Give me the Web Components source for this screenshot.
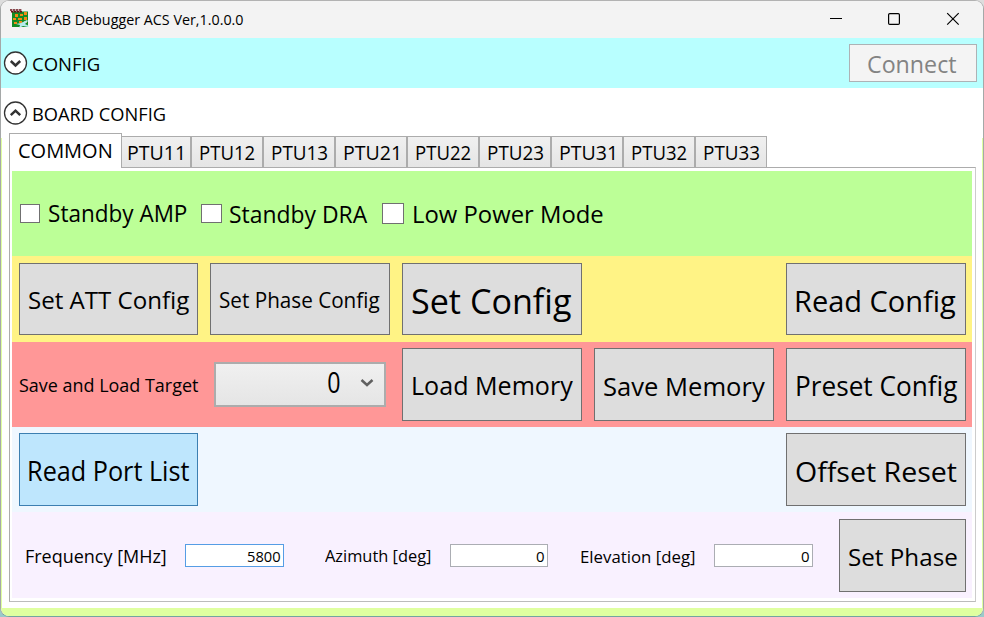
<!DOCTYPE html>
<html lang="en"><head><meta charset="utf-8"><title>PCAB Debugger ACS Ver,1.0.0.0</title>
<style>html,body{margin:0;height:100%;overflow:hidden}body{font-family:"Open Sans","Noto Sans",sans-serif;background:linear-gradient(#ddd 50%,#9acaca 50%)}</style></head>
<body><debugger-window></debugger-window>
<script>
const define=(name,html,setup)=>{
  const t=document.createElement('template');t.innerHTML=html;
  customElements.define(name,class extends HTMLElement{
    connectedCallback(){
      if(this.shadowRoot)return;
      this.attachShadow({mode:'open'}).append(t.content.cloneNode(true));
      if(setup)setup(this,this.shadowRoot);
    }
  });
};
const ctx=document.createElement('canvas').getContext('2d');
const num=(el,n,d=0)=>el.hasAttribute(n)?parseFloat(el.getAttribute(n)):d;

/* Label whose visible glyphs span exactly "w" pixels, baseline "base" px below its container's top. */
define('ui-text','<style>:host{display:block;flex:none;white-space:nowrap}span{display:inline-block;transform-origin:0 0;white-space:pre}</style><span><slot></slot></span>',(el,r)=>{
  const s=num(el,'size',16),w=num(el,'w',100);
  ctx.font=`${s}px "Open Sans"`;
  const m=ctx.measureText(el.textContent),k=w/(m.actualBoundingBoxLeft+m.actualBoundingBoxRight);
  const lh=Math.round(s*1.36),off=Math.round((lh-s*1.362)/2+s*1.069);
  el.style.cssText=`width:${w}px;height:${lh}px;line-height:${lh}px;font-size:${s}px;margin-top:${num(el,'base')-off}px;margin-left:${num(el,'gap')}px`;
  r.querySelector('span').style.transform=`translateX(${m.actualBoundingBoxLeft*k}px) scaleX(${k})`;
});

define('ui-button',`<style>:host{display:flex;flex:none;box-sizing:border-box;align-items:flex-start;background:#ddd;border:1px solid #707070;color:#000}
:host([hot]){background:#bee6fd;border-color:#3c7fb1}:host([disabled]){background:#f4f4f4;border-color:#adb2b5;color:#838383}</style><slot></slot>`,(el)=>{
  el.style.width=num(el,'width')+'px';el.style.height=num(el,'height')+'px';
  el.style.marginTop=num(el,'top')+'px';el.style.marginLeft=el.hasAttribute('end')?'auto':num(el,'gap')+'px';
});

define('ui-check',`<style>:host{display:block;flex:none;box-sizing:border-box;background:#fff;border:1px solid #707070}</style>`,el=>{
  el.style.width=num(el,'width')+'px';el.style.height=num(el,'height')+'px';
  el.style.marginTop=num(el,'top')+'px';el.style.marginLeft=num(el,'gap')+'px';
});

define('ui-field',`<style>:host{display:flex;flex:none;box-sizing:border-box;height:23px;margin-top:32px;background:#fff;border:1px solid #abadb3;justify-content:flex-end;align-items:flex-start;padding-right:3px}:host([focused]){border-color:#569de5}</style><slot></slot>`,el=>{
  el.style.width=num(el,'width')+'px';el.style.marginLeft=num(el,'gap')+'px';
});

define('ui-combo',`<style>:host{display:flex;flex:none;box-sizing:border-box;width:172px;height:45px;margin:20px 0 0 16px;border:2px solid #acacac;background:linear-gradient(#f0f0f0,#e5e5e5);align-items:flex-start}
svg{margin:14px 0 0 20px}</style><slot></slot><svg width="14" height="12"><path d="M1.5 2 7 7 12.5 2" fill="none" stroke="#606060" stroke-width="2.5"/></svg>`);

define('ui-row',`<style>:host{display:flex;box-sizing:border-box;align-items:flex-start;width:960px;padding:0 6px 0 7px}</style><slot></slot>`,el=>{
  el.style.height=num(el,'height')+'px';el.style.background=el.getAttribute('fill');
});

define('ui-expander',`<style>:host{display:flex;height:50px;box-sizing:border-box;align-items:flex-start;padding:0 6px 0 2px}svg{flex:none;margin-top:13px}</style>
<svg width="25" height="25" viewBox="0 0 25 25"><circle cx="12.5" cy="12" r="11" fill="#fff" stroke="#333" stroke-width="1.3"/><path fill="none" stroke="#333" stroke-width="2.5"/></svg><slot></slot>`,(el,r)=>{
  r.querySelector('path').setAttribute('d',el.hasAttribute('open')?'M7.8 14.2 12.5 9.7 17.2 14.2':'M7.8 10 12.5 14.5 17.2 10');
});

define('ui-tab',`<style>:host{display:flex;flex:none;box-sizing:border-box;width:72px;height:32px;align-items:flex-start;border:1px solid #acacac;background:linear-gradient(#f0f0f0,#e5e5e5)}
:host([first]){width:69px;border-left:0}:host([selected]){width:113px;height:35px;background:#fff;border-bottom:0;position:relative}</style><slot></slot>`);

define('app-icon',`<style>:host{display:block;margin:7px 0 0 8px;width:21px;height:21px}</style><svg width="21" height="21" viewBox="0 0 21 21">
<rect x="3" y="3.5" width="16" height="15.5" fill="#138b25"/>
<g fill="#f28a16"><path d="M6 6h3v3H6zM11 6h3v2h-3zM15 4h3v3h-3zM4 10h3v2H4zM9 10h4v2H9zM15 9h3v3h-3zM5 14h3v2H5zM10 13h3v2h-3zM15 13h3v2h-3z"/></g>
<path d="M1 2h12M2 3.8h11" stroke="#661018" stroke-width="1.6" stroke-dasharray="2.4 .6"/>
<path d="m7 16 5-1 6-3 1 1-3 3 4 2-1 1-5-1-4 2 1-3Z" fill="#b5ebed"/></svg>`);

define('title-bar',`<style>:host{display:flex;height:37px;background:#f3f3f3;align-items:flex-start}svg{margin:10px 23px 0 auto;flex:none}</style>
<app-icon></app-icon><ui-text size="15" w="207" base="24" gap="6">PCAB Debugger ACS Ver,1.0.0.0</ui-text>
<svg width="130" height="16" viewBox="0 0 130 16" fill="none" stroke="#000" stroke-width="1.2"><path d="M0 7.5h12"/><rect x="58.6" y="2.6" width="10.8" height="10.8" rx="1.2"/><path d="m117.2 2.2 11.5 11.5m0-11.5-11.5 11.5"/></svg>`);

const tabs=['PTU11','PTU12','PTU13','PTU21','PTU22','PTU23','PTU31','PTU32','PTU33'];
define('debugger-window',`<style>
:host{display:flex;flex-direction:column;box-sizing:border-box;width:984px;height:617px;border:1px solid #a5a8a8;border-top-color:#b2b2b2;border-bottom-color:#72a5a0;border-radius:9px;overflow:hidden;background:#fff}
.cyan{background:#b8ffff}
.tabs{display:flex;align-items:flex-end;height:35px;padding-left:8px;margin-top:-5px;margin-bottom:-1px;position:relative;z-index:1}
.panel{box-sizing:border-box;width:967px;height:435px;margin-left:8px;border:1px solid #acacac;border-right-color:#ccc;border-bottom-color:#bbb;padding:3px 2px}
.body{height:520px;background:linear-gradient(#dfffa0,#dfffa0) 0 50px/1px 100% no-repeat,linear-gradient(#dfffa0,#dfffa0) 100% 50px/1px 100% no-repeat,#fff}
.bottom{flex:1;background:#dfffa0}
</style>
<title-bar></title-bar>
<ui-expander class="cyan"><ui-text size="18" w="66" base="33" gap="5">CONFIG</ui-text>
<ui-button end disabled width="128" height="38" top="6"><ui-text size="24" w="88" base="28" gap="18">Connect</ui-text></ui-button></ui-expander>
<div class="body">
<ui-expander open><ui-text size="18" w="132" base="33" gap="5">BOARD CONFIG</ui-text></ui-expander>
<div class="tabs"><ui-tab selected><ui-text size="19.5" w="92" base="24" gap="9">COMMON</ui-text></ui-tab>${tabs.map((t,i)=>`<ui-tab ${i?'':'first'}><ui-text size="19.5" w="${t.endsWith('1')?54:55}" base="23" gap="${i?8:6}">${t}</ui-text></ui-tab>`).join('')}</div>
<div class="panel">
<ui-row height="85" fill="#bcff97">
<ui-check width="20" height="19" top="33" gap="1"></ui-check><ui-text size="24" w="138" base="51" gap="9">Standby AMP</ui-text>
<ui-check width="21" height="19" top="33" gap="14"></ui-check><ui-text size="24" w="138" base="52" gap="8">Standby DRA</ui-text>
<ui-check width="22" height="21" top="32" gap="14"></ui-check><ui-text size="24.5" w="189" base="52" gap="10">Low Power Mode</ui-text></ui-row>
<ui-row height="86" fill="#fff385">
<ui-button width="179" height="72" top="7"><ui-text size="24.5" w="160" base="45" gap="9">Set ATT Config</ui-text></ui-button>
<ui-button width="180" height="72" top="7" gap="12"><ui-text size="21.5" w="160" base="44" gap="9">Set Phase Config</ui-text></ui-button>
<ui-button width="180" height="72" top="7" gap="12"><ui-text size="34" w="159" base="50" gap="9">Set Config</ui-text></ui-button>
<ui-button end width="180" height="72" top="7"><ui-text size="29" w="160" base="48" gap="9">Read Config</ui-text></ui-button></ui-row>
<ui-row height="85" fill="#ff9797">
<ui-text size="18" w="179" base="50">Save and Load Target</ui-text><ui-combo><ui-text size="29" w="12" base="29" gap="112">0</ui-text></ui-combo>
<ui-button width="180" height="73" top="6" gap="16"><ui-text size="25.5" w="160" base="46" gap="10">Load Memory</ui-text></ui-button>
<ui-button width="180" height="73" top="6" gap="12"><ui-text size="25.5" w="161" base="47" gap="9">Save Memory</ui-text></ui-button>
<ui-button width="180" height="73" top="6" gap="12"><ui-text size="26.5" w="160" base="47" gap="10">Preset Config</ui-text></ui-button></ui-row>
<ui-row height="85" fill="#eff7ff">
<ui-button hot width="179" height="73" top="6"><ui-text size="26.5" w="160" base="47" gap="9">Read Port List</ui-text></ui-button>
<ui-button end width="180" height="73" top="6"><ui-text size="28" w="161" base="48" gap="9">Offset Reset</ui-text></ui-button></ui-row>
<ui-row height="86" fill="#f9f1ff">
<ui-text size="17.5" w="140" base="51" gap="7">Frequency [MHz]</ui-text><ui-field focused width="99" gap="19"><ui-text size="15" w="33" base="17">5800</ui-text></ui-field>
<ui-text size="16.5" w="106" base="50" gap="41">Azimuth [deg]</ui-text><ui-field width="98" gap="19"><ui-text size="15" w="8" base="17">0</ui-text></ui-field>
<ui-text size="17" w="114" base="51" gap="33">Elevation [deg]</ui-text><ui-field width="99" gap="19"><ui-text size="15" w="8" base="17">0</ui-text></ui-field>
<ui-button end width="127" height="73" top="7"><ui-text size="24.5" w="108" base="46" gap="9">Set Phase</ui-text></ui-button></ui-row>
</div></div><div class="bottom"></div>`);
</script></body></html>
